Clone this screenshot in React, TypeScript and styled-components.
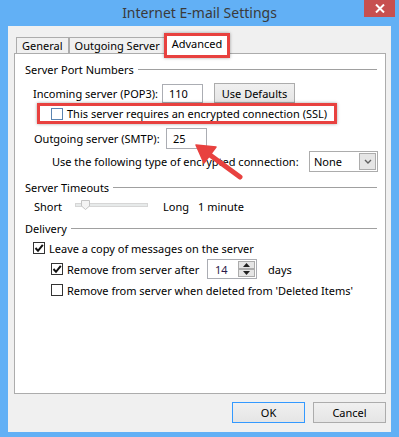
import styled, { createGlobalStyle } from "styled-components";

const GlobalStyle = createGlobalStyle`
  html, body { margin: 0; padding: 0; }
  body {
    font-family: "Noto Sans", "Open Sans", sans-serif;
    font-size: 11px;
    color: #000;
  }
  * { box-sizing: border-box; }
`;

const RED = "#e8413f";

export default function App() {
  return (
    <>
      <GlobalStyle />
      <Window>
        <TitleBar>
          <span />
          <Title>Internet E-mail Settings</Title>
          <CloseButton>
            <svg width="10" height="9" viewBox="0 0 10 9">
              <path d="M1 0.5 L9 8.5 M9 0.5 L1 8.5" stroke="#fff" strokeWidth="2" />
            </svg>
          </CloseButton>
        </TitleBar>
        <Client>
          <Tabs>
            <Tab>General</Tab>
            <Tab>Outgoing Server</Tab>
            <Tab $active>Advanced</Tab>
          </Tabs>
          <Panel>
            <GroupHeader>Server Port Numbers</GroupHeader>
            <Row $top={6} $indent={8} $height={20}>
              <Label $width={129}>Incoming server (POP3):</Label>
              <TextBox $width={41} $height={19}>110</TextBox>
              <Button $width={81} $height={20} style={{ marginLeft: 11 }}>
                Use Defaults
              </Button>
            </Row>
            <Highlight>
              <CheckBox $blue />
              <span>This server requires an encrypted connection (SSL)</span>
            </Highlight>
            <Row $top={4} $indent={9} $height={21}>
              <Label $width={132}>Outgoing server (SMTP):</Label>
              <TextBox $width={41} $height={21}>25</TextBox>
            </Row>
            <Row $top={2} $indent={27} $height={21}>
              <span>Use the following type of encrypted connection:</span>
              <Select>
                <span>None</span>
                <SelectArrow>
                  <svg width="8" height="5" viewBox="0 0 8 5">
                    <path d="M1 1 L4 4 L7 1" stroke="#606060" strokeWidth="1.4" fill="none" />
                  </svg>
                </SelectArrow>
              </Select>
            </Row>
            <GroupHeader $top={7}>Server Timeouts</GroupHeader>
            <Row $top={3} $indent={9} $height={16}>
              <Label $width={41}>Short</Label>
              <Slider>
                <SliderThumb viewBox="0 0 9 10" width="9" height="10">
                  <path d="M0.5 0.5 H8.5 V6 L4.5 9.5 L0.5 6 Z" fill="#f4f4f4" stroke="#c4c4c4" />
                </SliderThumb>
              </Slider>
              <Label $width={35} style={{ marginLeft: 15 }}>Long</Label>
              <span>1 minute</span>
            </Row>
            <GroupHeader $top={6}>Delivery</GroupHeader>
            <Row $top={4} $indent={8} $height={16}>
              <CheckBox $checked />
              <span>Leave a copy of messages on the server</span>
            </Row>
            <Row $top={3} $indent={26} $height={20}>
              <CheckBox $checked />
              <Label $width={140}>Remove from server after</Label>
              <SpinBox>
                <SpinValue>14</SpinValue>
                <SpinButtons>
                  <SpinHalf>
                    <svg width="7" height="4" viewBox="0 0 7 4">
                      <path d="M0 4 L3.5 0 L7 4 Z" fill="#202020" />
                    </svg>
                  </SpinHalf>
                  <SpinHalf>
                    <svg width="7" height="4" viewBox="0 0 7 4">
                      <path d="M0 0 L3.5 4 L7 0 Z" fill="#202020" />
                    </svg>
                  </SpinHalf>
                </SpinButtons>
              </SpinBox>
              <span style={{ marginLeft: 11 }}>days</span>
            </Row>
            <Row $top={3} $indent={26} $height={16}>
              <CheckBox />
              <span>Remove from server when deleted from 'Deleted Items'</span>
            </Row>
          </Panel>
          <Footer>
            <Button $width={73} $height={21} $default>
              OK
            </Button>
            <Button $width={73} $height={21}>
              Cancel
            </Button>
          </Footer>
        </Client>
        <Arrow width="399" height="437" viewBox="0 0 399 437">
          <g fill={RED} stroke={RED} strokeLinejoin="round">
            <path d="M240 177 L210 155" strokeWidth="5" strokeLinecap="round" />
            <path d="M196 145 L216 147 L204 163 Z" strokeWidth="1.5" />
          </g>
        </Arrow>
      </Window>
    </>
  );
}

function CheckBox({ $checked, $blue }: { $checked?: boolean; $blue?: boolean }) {
  return (
    <Box $blue={$blue}>
      {$checked && (
        <svg width="10" height="10" viewBox="0 0 10 10">
          <path d="M1.5 5 L4 7.8 L8.8 1.8" stroke="#111" strokeWidth="2" fill="none" />
        </svg>
      )}
    </Box>
  );
}

const Window = styled.div`
  position: relative;
  width: 399px;
  height: 437px;
  background: #62b0f5;
  display: flex;
  flex-direction: column;
  overflow: hidden;
`;

const TitleBar = styled.div`
  height: 26px;
  display: grid;
  grid-template-columns: 35px 1fr 35px;
  align-items: start;
`;

const Title = styled.div`
  text-align: center;
  font-size: 14px;
  line-height: 25px;
  color: #3a3a3a;
`;

const CloseButton = styled.div`
  justify-self: end;
  margin-right: 4px;
  width: 31px;
  height: 17px;
  background: #c75050;
  display: flex;
  align-items: center;
  justify-content: center;
`;

const Client = styled.div`
  margin: 0 8px 5px;
  flex: 1;
  background: #f0f0f0;
  padding: 8px 5px 0 6px;
  display: flex;
  flex-direction: column;
`;

const Tabs = styled.div`
  display: flex;
  align-items: flex-end;
  height: 19px;
  padding-left: 2px;
  position: relative;
  z-index: 1;
`;

const Tab = styled.div<{ $active?: boolean }>`
  position: relative;
  height: ${(p) => (p.$active ? "20px" : "16px")};
  margin-bottom: ${(p) => (p.$active ? "-1px" : "0")};
  padding: ${(p) => (p.$active ? "0 6px" : "0 5px")};
  line-height: ${(p) => (p.$active ? "17px" : "16px")};
  border: 1px solid #acacac;
  border-bottom: none;
  background: ${(p) => (p.$active ? "#fff" : "#f0f0f0")};
  margin-left: ${(p) => (p.$active ? "-1px" : "0")};
  & + & {
    border-left: ${(p) => (p.$active ? "1px solid #acacac" : "none")};
  }
  ${(p) =>
    p.$active &&
    `
    &::after {
      content: "";
      position: absolute;
      left: -2px;
      right: -2px;
      top: -2px;
      bottom: -4px;
      border: 3px solid ${RED};
      box-shadow: 0 0 3px rgba(0,0,0,0.35);
    }
  `}
`;

const Panel = styled.div`
  width: 372px;
  height: 341px;
  background: #fff;
  border: 1px solid #acacac;
  padding: 7px 7px 0 10px;
  display: flex;
  flex-direction: column;
`;

const GroupHeader = styled.div<{ $top?: number }>`
  display: flex;
  align-items: center;
  gap: 4px;
  height: 16px;
  margin-top: ${(p) => p.$top ?? 0}px;
  margin-right: 1px;
  white-space: nowrap;
  &::after {
    content: "";
    flex: 1;
    height: 1px;
    background: #a0a0a0;
  }
`;

const Row = styled.div<{ $top: number; $indent: number; $height: number }>`
  display: flex;
  align-items: center;
  margin-top: ${(p) => p.$top}px;
  padding-left: ${(p) => p.$indent}px;
  height: ${(p) => p.$height}px;
  white-space: nowrap;
`;

const Label = styled.span<{ $width: number }>`
  width: ${(p) => p.$width}px;
  flex: none;
`;

const TextBox = styled.div<{ $width: number; $height: number }>`
  width: ${(p) => p.$width}px;
  height: ${(p) => p.$height}px;
  border: 1px solid #abadb3;
  background: #fff;
  padding-left: 6px;
  display: flex;
  align-items: center;
`;

const Button = styled.div<{ $width: number; $height: number; $default?: boolean }>`
  width: ${(p) => p.$width}px;
  height: ${(p) => p.$height}px;
  border: 1px solid ${(p) => (p.$default ? "#3399ff" : "#acacac")};
  background: linear-gradient(#f0f0f0, #e5e5e5);
  display: flex;
  align-items: center;
  justify-content: center;
`;

const Highlight = styled.div`
  margin-left: 12px;
  width: 300px;
  height: 21px;
  border: 3px solid ${RED};
  box-shadow: 0 0 3px rgba(0, 0, 0, 0.35);
  display: flex;
  align-items: center;
  gap: 4px;
  padding-left: 11px;
  white-space: nowrap;
`;

const Box = styled.div<{ $blue?: boolean }>`
  width: 12px;
  height: 12px;
  flex: none;
  border: 1px solid ${(p) => (p.$blue ? "#5b84b1" : "#333")};
  background: #fff;
  display: flex;
  align-items: center;
  justify-content: center;
  margin-right: 4px;
  ${Highlight} & {
    margin-right: 0;
  }
`;

const Select = styled.div`
  margin-left: auto;
  width: 69px;
  height: 21px;
  border: 1px solid #acacac;
  background: #fff;
  display: flex;
  align-items: center;
  justify-content: space-between;
  padding: 1px 1px 1px 4px;
`;

const SelectArrow = styled.div`
  width: 17px;
  height: 17px;
  background: #e5e5e5;
  border: 1px solid #acacac;
  display: flex;
  align-items: center;
  justify-content: center;
`;

const Slider = styled.div`
  position: relative;
  width: 73px;
  height: 4px;
  margin-top: -2px;
  background: #e7eaea;
  border: 1px solid #d6d6d6;
`;

const SliderThumb = styled.svg`
  position: absolute;
  left: 5px;
  top: -4px;
`;

const SpinBox = styled.div`
  width: 50px;
  height: 20px;
  border: 1px solid #abadb3;
  background: #fff;
  display: flex;
  align-items: center;
  justify-content: space-between;
  padding: 1px;
`;

const SpinValue = styled.span`
  padding-left: 6px;
  color: #2b1a4a;
`;

const SpinButtons = styled.div`
  width: 17px;
  height: 16px;
  display: flex;
  flex-direction: column;
`;

const SpinHalf = styled.div`
  flex: 1;
  background: #e5e5e5;
  border: 1px solid #acacac;
  display: flex;
  align-items: center;
  justify-content: center;
`;

const Footer = styled.div`
  display: flex;
  justify-content: flex-end;
  gap: 8px;
  margin-top: 8px;
`;

const Arrow = styled.svg`
  position: absolute;
  left: 0;
  top: 0;
  pointer-events: none;
`;
